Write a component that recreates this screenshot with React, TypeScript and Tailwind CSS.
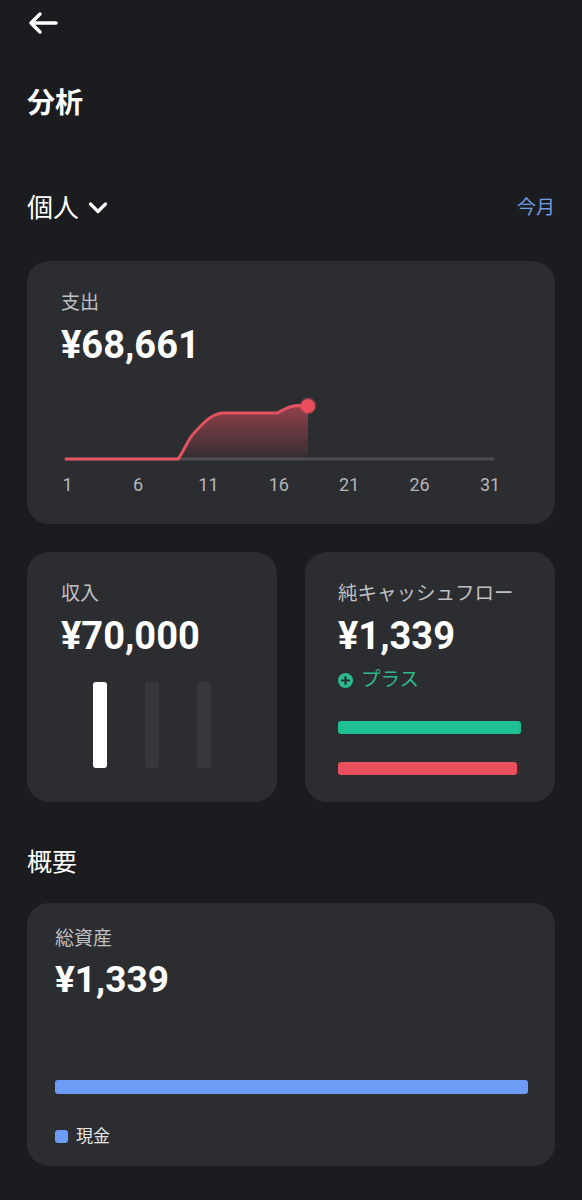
import React from "react";

const days = [1, 6, 11, 16, 21, 26, 31];
const x0 = 39;

function BackArrow() {
  return (
    <svg width="32" height="24" viewBox="0 0 32 24" fill="none">
      <path
        d="M29 12H4M13 3L4 12L13 21"
        stroke="white"
        strokeWidth="3.5"
        strokeLinecap="round"
        strokeLinejoin="round"
      />
    </svg>
  );
}

function Chevron() {
  return (
    <svg width="20" height="14" viewBox="0 0 20 14" fill="none">
      <path
        d="M2.5 3L10 10.5L17.5 3"
        stroke="white"
        strokeWidth="3.2"
        strokeLinecap="round"
        strokeLinejoin="round"
      />
    </svg>
  );
}

function SpendChart() {
  const line =
    "M39 69 L151 69 C158 60 160 50 168 42 C178 31 186 23 197 23 L250 23 C258 19 262 16 270 15.5 L281 16";
  const area = line + " L281 69 L151 69 Z";
  return (
    <svg width="528" height="110" viewBox="0 0 528 110" className="block">
      <defs>
        <linearGradient id="spendFill" x1="0" y1="0" x2="0" y2="1">
          <stop offset="0%" stopColor="#e8505f" stopOpacity="0.55" />
          <stop offset="100%" stopColor="#e8505f" stopOpacity="0.04" />
        </linearGradient>
      </defs>
      <line x1={x0} y1="69" x2="466" y2="69" stroke="#4b4c51" strokeWidth="3" strokeLinecap="round" />
      <path d={area} fill="url(#spendFill)" />
      <path d={line} fill="none" stroke="#e2525f" strokeWidth="3" strokeLinecap="round" strokeLinejoin="round" />
      <circle cx="281" cy="16" r="8.5" fill="#e8505f" opacity="0.35" />
      <circle cx="281" cy="16" r="7" fill="#ea4d5c" />
      {days.map((d, i) => (
        <text
          key={d}
          x={40.6 + 70.4 * i}
          y="101"
          textAnchor="middle"
          fill="#b4b5b9"
          fontSize="18"
          fontFamily="Roboto, sans-serif"
        >
          {d}
        </text>
      ))}
    </svg>
  );
}

export default function App() {
  return (
    <div className="min-h-screen bg-[#1b1c20] px-[27px] pb-[34px] text-white font-['Roboto','Noto_Sans_CJK_JP',sans-serif]">
      <div className="flex h-[46px] items-center">
        <BackArrow />
      </div>

      <h1 className="mt-[40px] text-[28px] font-bold leading-[36px]">分析</h1>

      <div className="mt-[70px] flex h-[32px] items-center justify-between">
        <div className="flex items-center gap-[9px]">
          <span className="text-[26px] leading-[32px]">個人</span>
          <Chevron />
        </div>
        <span className="text-[19px] text-[#6e9de4]">今月</span>
      </div>

      {/* 支出 */}
      <div className="mt-[37px] h-[263px] rounded-[22px] bg-[#2c2d31]">
        <div className="pl-[34px] pt-[29px]">
          <div className="text-[19px] leading-[26px] text-[#bfc0c4]">支出</div>
          <div className="mt-[11px] text-[38px] font-bold leading-[36px]">¥68,661</div>
        </div>
        <div className="mt-[27px]">
          <SpendChart />
        </div>
      </div>

      <div className="mt-[28px] grid grid-cols-2 gap-[28px]">
        {/* 収入 */}
        <div className="h-[250px] rounded-[22px] bg-[#2c2d31] pl-[34px] pt-[29px]">
          <div className="text-[19px] leading-[26px] text-[#bfc0c4]">収入</div>
          <div className="mt-[11px] text-[38px] font-bold leading-[36px]">¥70,000</div>
          <div className="-ml-[34px] mt-[28px] flex justify-center gap-[38px]">
            <div className="h-[86px] w-[14px] rounded-[3px] bg-white" />
            <div className="h-[86px] w-[14px] rounded-[3px] bg-[#37383c]" />
            <div className="h-[86px] w-[14px] rounded-[3px] bg-[#37383c]" />
          </div>
        </div>

        {/* 純キャッシュフロー */}
        <div className="h-[250px] rounded-[22px] bg-[#2c2d31] pl-[33px] pr-[34px] pt-[29px]">
          <div className="whitespace-nowrap text-[19.5px] leading-[26px] text-[#bfc0c4]">純キャッシュフロー</div>
          <div className="mt-[11px] text-[38px] font-bold leading-[36px]">¥1,339</div>
          <div className="mt-[14px] flex h-[24px] items-center gap-[8px] text-[#2cb98c]">
            <svg width="15" height="15" viewBox="0 0 16 16">
              <circle cx="8" cy="8" r="8" fill="#2cb98c" />
              <path d="M8 4.2V11.8M4.2 8H11.8" stroke="#2c2d31" strokeWidth="2.2" strokeLinecap="round" />
            </svg>
            <span className="text-[19.5px] leading-[24px]">プラス</span>
          </div>
          <div className="mt-[29px] h-[13px] rounded-[3px] bg-[#1fc093]" />
          <div className="mt-[28px] h-[13px] rounded-[3px] bg-[#3e2b31]">
            <div className="h-full w-[98%] rounded-[3px] bg-[#ea4f5e]" />
          </div>
        </div>
      </div>

      <h2 className="mt-[45px] text-[25px] leading-[32px]">概要</h2>

      {/* 総資産 */}
      <div className="mt-[24px] h-[263px] rounded-[22px] bg-[#2c2d31] pl-[28px] pr-[27px] pt-[23px]">
        <div className="text-[19px] leading-[26px] text-[#bfc0c4]">総資産</div>
        <div className="mt-[10px] text-[37px] font-bold leading-[36px]">¥1,339</div>
        <div className="mt-[82px] h-[14px] rounded-[3px] bg-[#6d9cf6]" />
        <div className="mt-[31px] flex items-center gap-[8px]">
          <div className="h-[13px] w-[13px] rounded-[3px] bg-[#6d9cf6]" />
          <span className="text-[17px] leading-[22px] text-[#e6e6e8]">現金</span>
        </div>
      </div>
    </div>
  );
}
